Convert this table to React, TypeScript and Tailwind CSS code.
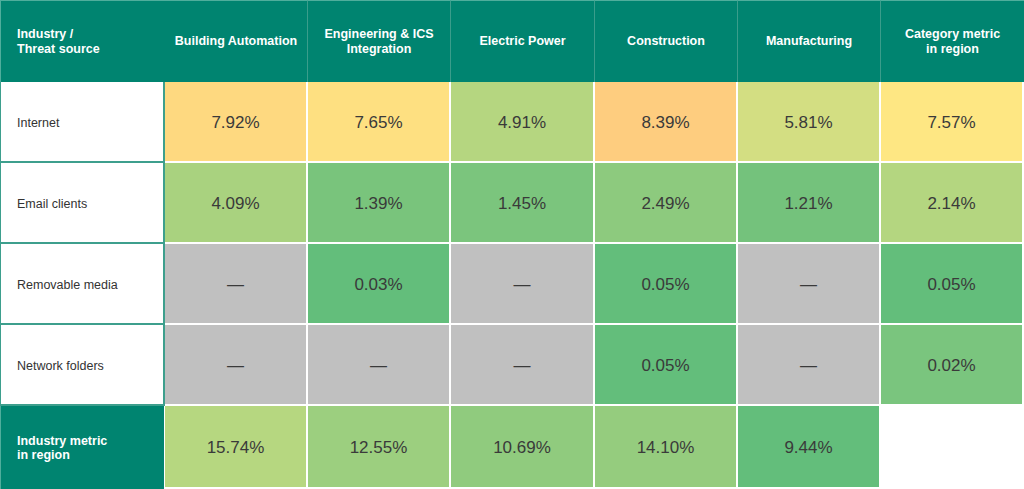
import React from "react";

type Cell = { v: string; bg: string } | null;

const headers = [
  "Building Automation",
  "Engineering & ICS\nIntegration",
  "Electric Power",
  "Construction",
  "Manufacturing",
  "Category metric\nin region",
];

const rows: { label: string; cells: Cell[] }[] = [
  {
    label: "Internet",
    cells: [
      { v: "7.92%", bg: "bg-[#fed980]" },
      { v: "7.65%", bg: "bg-[#fee081]" },
      { v: "4.91%", bg: "bg-[#b5d680]" },
      { v: "8.39%", bg: "bg-[#fecd7f]" },
      { v: "5.81%", bg: "bg-[#d3de82]" },
      { v: "7.57%", bg: "bg-[#fee783]" },
    ],
  },
  {
    label: "Email clients",
    cells: [
      { v: "4.09%", bg: "bg-[#a9d27f]" },
      { v: "1.39%", bg: "bg-[#79c47c]" },
      { v: "1.45%", bg: "bg-[#7bc57d]" },
      { v: "2.49%", bg: "bg-[#8dca7e]" },
      { v: "1.21%", bg: "bg-[#74c27c]" },
      { v: "2.14%", bg: "bg-[#b4d680]" },
    ],
  },
  {
    label: "Removable media",
    cells: [
      { v: "—", bg: "bg-[#c0c0c0]" },
      { v: "0.03%", bg: "bg-[#63be7b]" },
      { v: "—", bg: "bg-[#c0c0c0]" },
      { v: "0.05%", bg: "bg-[#63be7b]" },
      { v: "—", bg: "bg-[#c0c0c0]" },
      { v: "0.05%", bg: "bg-[#63be7b]" },
    ],
  },
  {
    label: "Network folders",
    cells: [
      { v: "—", bg: "bg-[#c0c0c0]" },
      { v: "—", bg: "bg-[#c0c0c0]" },
      { v: "—", bg: "bg-[#c0c0c0]" },
      { v: "0.05%", bg: "bg-[#63be7b]" },
      { v: "—", bg: "bg-[#c0c0c0]" },
      { v: "0.02%", bg: "bg-[#7ac57e]" },
    ],
  },
];

const footer: Cell[] = [
  { v: "15.74%", bg: "bg-[#b6d780]" },
  { v: "12.55%", bg: "bg-[#9ccf7f]" },
  { v: "10.69%", bg: "bg-[#90cb7e]" },
  { v: "14.10%", bg: "bg-[#95cc7e]" },
  { v: "9.44%", bg: "bg-[#63be7b]" },
  null,
];

function Lines({ text }: { text: string }) {
  return (
    <>
      {text.split("\n").map((l, i) => (
        <span key={i} className="block">
          {l}
        </span>
      ))}
    </>
  );
}

function ValueCell({ c }: { c: Cell }) {
  if (!c) return <div className="bg-white" />;
  return (
    <div
      className={`${c.bg} flex items-center justify-center border-r-2 border-b-2 border-white pt-[2px] text-[17px] text-[#3a3a3a]`}
    >
      {c.v}
    </div>
  );
}

export default function App() {
  return (
    <div
      className="w-[1024px] h-[489px] overflow-hidden bg-white"
      style={{ fontFamily: '"Liberation Sans", Arial, sans-serif' }}
    >
      <div className="grid h-[489px] grid-cols-[165px_143px_143px_144px_143px_143px_1fr] grid-rows-[82px_repeat(4,81px)_1fr]">
        {/* header */}
        <div className="flex items-center border-t border-l border-[#4fae9c] bg-[#008470] pl-4 text-[12.5px] font-bold leading-[14.5px] text-white">
          <div>
            <span className="block">Industry /</span>
            <span className="block">Threat source</span>
          </div>
        </div>
        {headers.map((h, i) => (
          <div
            key={h}
            className={`flex items-center justify-center border-t border-[#4fae9c] bg-[#008470] text-center text-[12.5px] font-bold leading-[14.5px] text-white ${
              i < 5 ? "border-r border-r-[#3a9d8b]" : ""
            }`}
          >
            <div>
              <Lines text={h} />
            </div>
          </div>
        ))}

        {/* data rows */}
        {rows.map((r) => (
          <React.Fragment key={r.label}>
            <div className="flex items-center border-l border-r-2 border-b-2 border-[#3d9f8d] bg-white pl-4 pt-[4px] text-[12.5px] text-[#333333]">
              {r.label}
            </div>
            {r.cells.map((c, i) => (
              <ValueCell key={i} c={c} />
            ))}
          </React.Fragment>
        ))}

        {/* footer */}
        <div className="flex items-center border-l border-r border-l-[#4fae9c] border-r-white bg-[#008470] pl-4 text-[12.5px] font-bold leading-[14px] text-white">
          <div>
            <span className="block">Industry metric</span>
            <span className="block">in region</span>
          </div>
        </div>
        {footer.map((c, i) => (
          <ValueCell key={i} c={c} />
        ))}
      </div>
    </div>
  );
}
